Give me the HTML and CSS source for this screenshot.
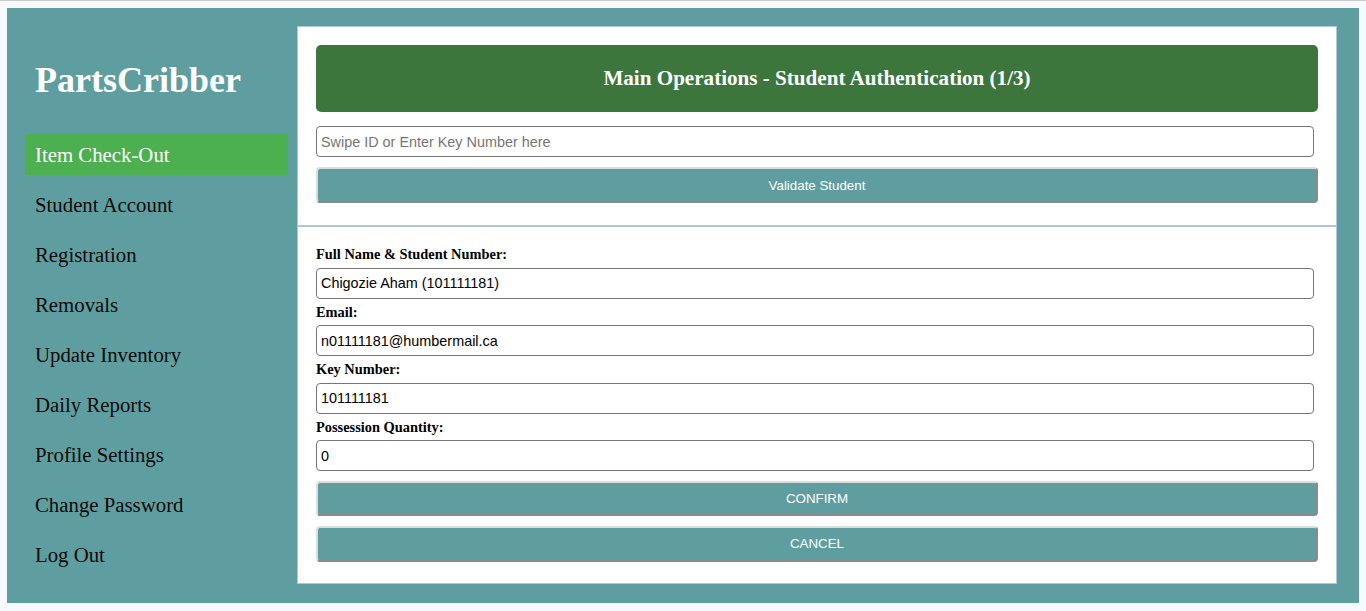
FILE: index.html
```html
<!DOCTYPE html>
<html lang="en">
<head>
<meta charset="utf-8">
<title>PartsCribber</title>
<link rel="stylesheet" href="styles.css">
</head>
<body>
<div class="app">
  <aside class="sidebar">
    <h1 class="brand">PartsCribber</h1>
    <nav class="nav">
      <a class="nav-item active">Item Check-Out</a>
      <a class="nav-item">Student Account</a>
      <a class="nav-item">Registration</a>
      <a class="nav-item">Removals</a>
      <a class="nav-item">Update Inventory</a>
      <a class="nav-item">Daily Reports</a>
      <a class="nav-item">Profile Settings</a>
      <a class="nav-item">Change Password</a>
      <a class="nav-item">Log Out</a>
    </nav>
  </aside>
  <main class="panel">
    <section class="auth">
      <div class="header">Main Operations - Student Authentication (1/3)</div>
      <input class="field first" type="text" placeholder="Swipe ID or Enter Key Number here">
      <button class="btn btn-validate">Validate Student</button>
    </section>
    <section class="details">
      <label class="lbl">Full Name &amp; Student Number:</label>
      <input class="field" type="text" value="Chigozie Aham (101111181)">
      <label class="lbl">Email:</label>
      <input class="field" type="text" value="n01111181@humbermail.ca">
      <label class="lbl">Key Number:</label>
      <input class="field" type="text" value="101111181">
      <label class="lbl">Possession Quantity:</label>
      <input class="field" type="text" value="0">
      <button class="btn btn-confirm">CONFIRM</button>
      <button class="btn btn-cancel">CANCEL</button>
    </section>
  </main>
</div>
</body>
</html>
```

FILE: styles.css
```css
html {
  border-top: 1px solid #c9c9cc;
  background: #f8f9fe;
}
body {
  margin: 7px 7px 8px 7px;
  background: #f8f9fe;
  font-family: "Liberation Serif", "Times New Roman", serif;
}
.app {
  display: flex;
  gap: 9px;
  box-sizing: border-box;
  height: 595px;
  padding: 18px 22px 19px 18px;
  background: #5f9ea0;
}
.sidebar {
  width: 263px;
  flex: none;
}
.brand {
  margin: 33px 0 33px 0;
  padding: 0 10px;
  font-size: 36px;
  line-height: 42px;
  font-weight: bold;
  color: #ffffff;
}
.nav {
  display: flex;
  flex-direction: column;
  gap: 9px;
}
.nav-item {
  display: block;
  height: 41px;
  line-height: 41px;
  padding-left: 10px;
  font-size: 20.8px;
  color: #0a0a0a;
}
.nav-item.active {
  background: #4caf50;
  color: #ffffff;
}
.panel {
  flex: 1;
  background: #ffffff;
  border: 1px solid #b0c4de;
  display: flex;
  flex-direction: column;
}
.auth {
  padding: 18px 18px 22px 18px;
  border-bottom: 2px solid #b0c4de;
  display: flex;
  flex-direction: column;
}
.header {
  height: 67px;
  border-radius: 5px;
  background: #3c763d;
  color: #ffffff;
  font-weight: bold;
  font-size: 21.1px;
  display: flex;
  align-items: center;
  justify-content: center;
}
.field {
  display: block;
  box-sizing: border-box;
  width: calc(100% - 4px);
  height: 31px;
  margin: 0;
  padding: 0 4px;
  border: 1px solid #767676;
  border-radius: 4px;
  font-family: "Liberation Sans", Arial, sans-serif;
  font-size: 14.4px;
  color: #000000;
}
.field::placeholder {
  color: #757575;
}
.field.first {
  margin-top: 14px;
}
.btn {
  display: block;
  box-sizing: border-box;
  width: 100%;
  height: 36px;
  margin: 10px 0 0 0;
  background: #5f9ea0;
  border: 2px solid;
  border-color: #dcdcdc #8a8a8a #8a8a8a #dcdcdc;
  border-radius: 4px;
  color: #ffffff;
  font-family: "Liberation Sans", Arial, sans-serif;
  font-size: 13.33px;
}
.details {
  padding: 14px 18px 0 18px;
  display: flex;
  flex-direction: column;
}
.lbl {
  display: block;
  margin: 5px 0 5px 0;
  font-size: 14.4px;
  line-height: 16.5px;
  font-weight: bold;
  color: #000000;
}
.btn-confirm {
  height: 34.5px;
}
```
